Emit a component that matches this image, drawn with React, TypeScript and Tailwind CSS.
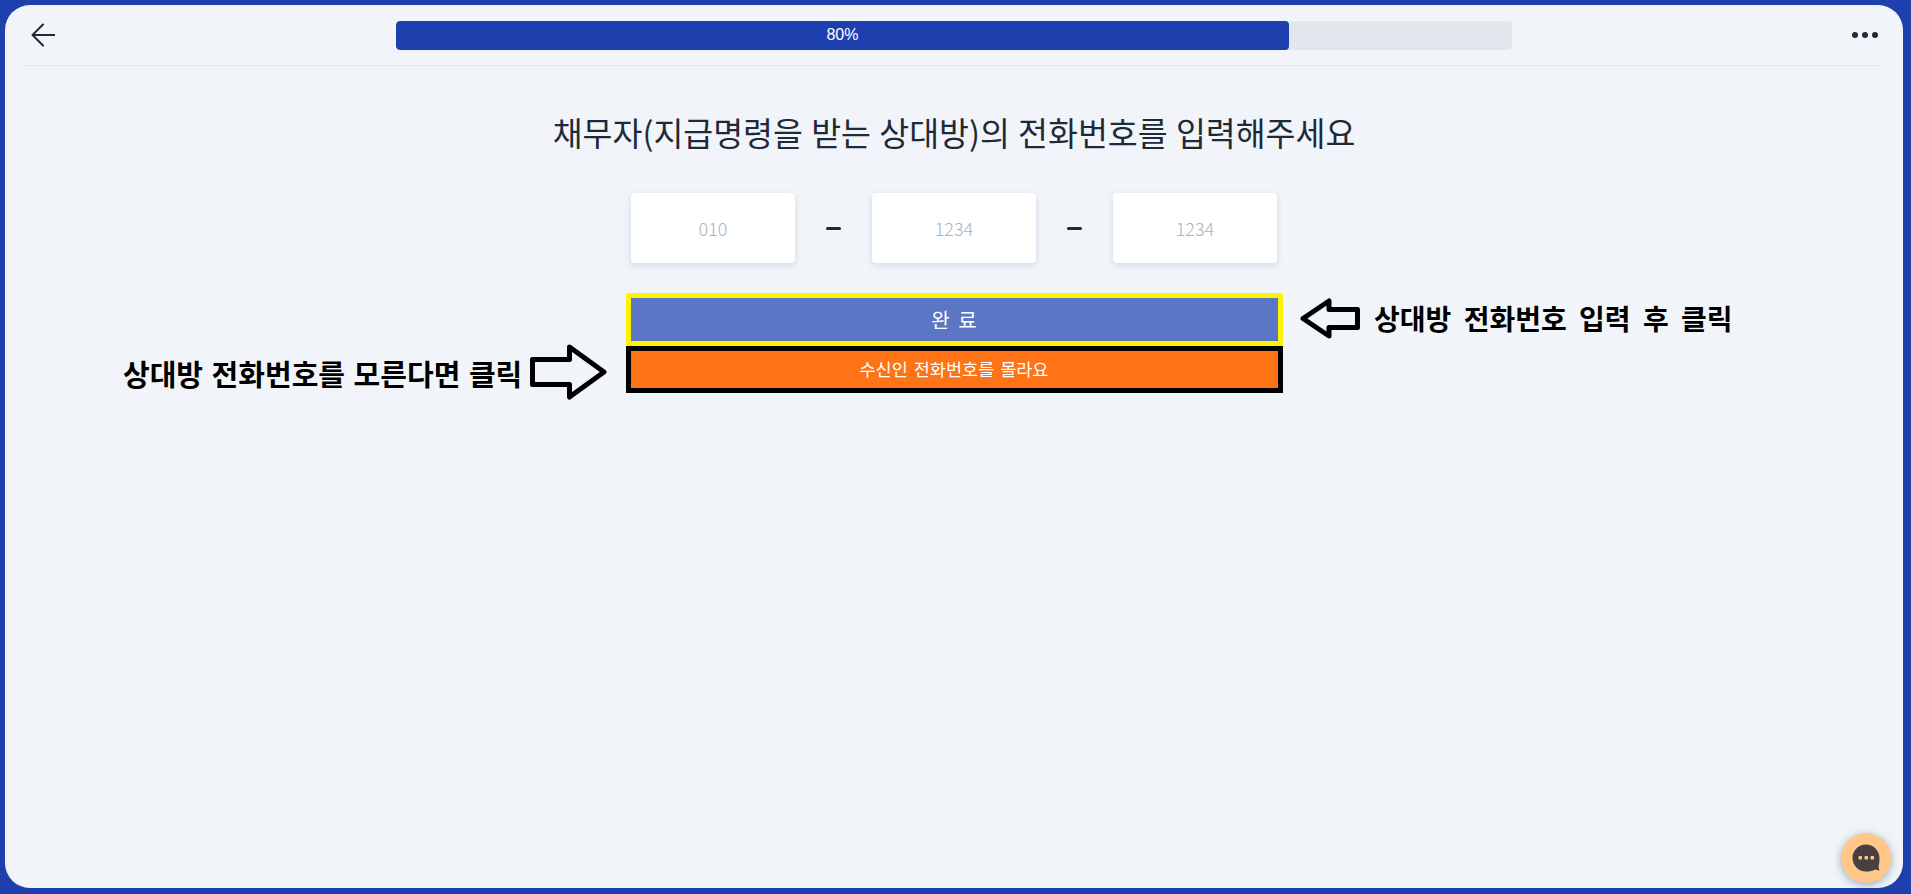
function PhoneInput({ placeholder }: { placeholder: string }) {
  return (
    <input
      placeholder={placeholder}
      className="h-[70px] w-[164px] rounded bg-white text-center text-[18px] font-light text-gray-700 shadow-[0_2px_6px_rgba(148,163,184,0.35)] outline-none placeholder:text-[#aab2c0]"
    />
  )
}

function Dash() {
  return <span className="mx-[31px] h-[3px] w-[15px] rounded-sm bg-[#1f2937]" />
}

export default function App() {
  return (
    <div
      className="h-[894px] w-full bg-[#1e40af] pb-[6px] pl-[5px] pr-[8px] pt-[5px]"
      style={{ fontFamily: '"Noto Sans CJK KR", "Noto Sans", sans-serif' }}
    >
      <div className="relative h-full overflow-hidden rounded-[25px] bg-[#f1f5f9]">
        <header className="mx-5 grid h-[61px] grid-cols-[371px_1116px_1fr] items-center border-b border-[#e2e8f0]">
          <svg viewBox="0 0 24 24" className="ml-[6px] h-[24px] w-[24px] text-[#1f2937]" fill="none" stroke="currentColor" strokeWidth="2" strokeLinecap="round" strokeLinejoin="round">
            <path d="M23.5 12H1.5M12 1.5L1.5 12L12 22.5" />
          </svg>
          <div className="flex h-[29px] overflow-hidden rounded bg-[#e2e6ed]">
            <div className="flex w-4/5 items-center justify-center rounded bg-[#1e40af] font-['Liberation_Sans'] text-[16px] text-white">
              80%
            </div>
          </div>
          <div className="mr-[5px] flex justify-end gap-[4px]">
            <span className="h-[6px] w-[6px] rounded-full bg-[#1f2937]" />
            <span className="h-[6px] w-[6px] rounded-full bg-[#1f2937]" />
            <span className="h-[6px] w-[6px] rounded-full bg-[#1f2937]" />
          </div>
        </header>

        <main className="flex flex-col items-center pt-[43px]">
          <h1 className="text-[32.5px] leading-[46px] text-[#1f2937] [word-spacing:1px]">
            채무자(지급명령을 받는 상대방)의 전화번호를 입력해주세요
          </h1>
          <div className="mt-[38px] flex items-center">
            <PhoneInput placeholder="010" />
            <Dash />
            <PhoneInput placeholder="1234" />
            <Dash />
            <PhoneInput placeholder="1234" />
          </div>
          <div className="mt-[30px] flex w-[657px] flex-col">
            <button className="h-[53px] rounded-[2px] border-[5px] border-[#fff200] bg-[#5c76c6] text-[20px] text-white [word-spacing:4px]">
              완 료
            </button>
            <button className="h-[47px] border-[5px] border-black bg-[#fd7316] text-[17.5px] text-white [word-spacing:2px]">
              수신인 전화번호를 몰라요
            </button>
          </div>
        </main>

        {/* annotations pasted over the page */}
        <span className="absolute left-[118px] top-[350px] text-[29px] font-bold leading-[36px] text-black [word-spacing:2px]">
          상대방 전화번호를 모른다면 클릭
        </span>
        <svg viewBox="0 0 77 56" className="absolute left-[525px] top-[339px] h-[56px] w-[77px]" fill="none">
          <path d="M2.5 15.5H39.5V3L74 28L39.5 53V40.5H2.5Z" stroke="#000" strokeWidth="5" strokeLinejoin="round" />
        </svg>
        <svg viewBox="0 0 60 41" className="absolute left-[1295px] top-[293px] h-[41px] w-[60px]" fill="none">
          <path d="M3 20.5L29 3V11.5H57.5V29.5H29V38Z" stroke="#000" strokeWidth="5" strokeLinejoin="round" />
        </svg>
        <span className="absolute left-[1369px] top-[295px] text-[28px] font-bold leading-[36px] text-black [word-spacing:6px]">
          상대방 전화번호 입력 후 클릭
        </span>

        <button className="absolute bottom-[5px] right-[12px] flex h-[50px] w-[50px] items-center justify-center rounded-full bg-[#ffc88a] shadow-[0_2px_8px_rgba(100,116,139,0.6)]">
          <svg viewBox="0 0 28 28" className="h-[28px] w-[28px]">
            <path d="M14 0.5 C21.5 0.5 27.5 6.5 27.5 14 C27.5 18 27 21.5 26.5 23 L27.5 26.5 L23 25.5 C21 27 17.5 27.5 14 27.5 C6.5 27.5 0.5 21.5 0.5 14 C0.5 6.5 6.5 0.5 14 0.5 Z" fill="#4a3f3f" />
            <rect x="6.5" y="12" width="3.5" height="3.5" rx="1" fill="#ffc88a" />
            <rect x="12.5" y="12" width="3.5" height="3.5" rx="1" fill="#ffc88a" />
            <rect x="18.5" y="12" width="3.5" height="3.5" rx="1" fill="#ffc88a" />
          </svg>
        </button>
      </div>
    </div>
  )
}
